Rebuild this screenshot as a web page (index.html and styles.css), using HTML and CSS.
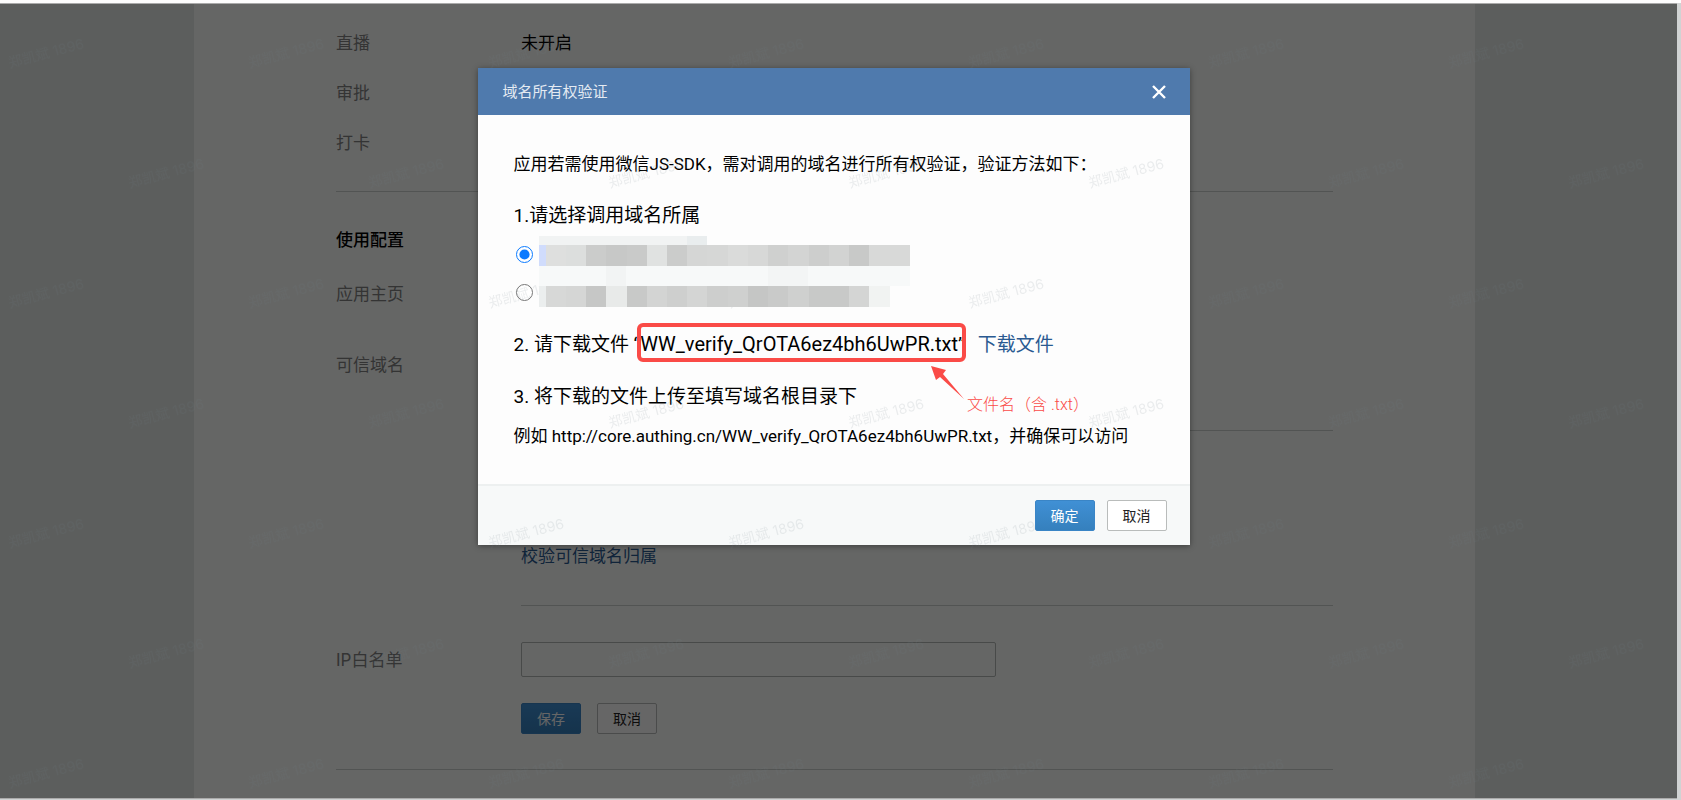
FILE: index.html
```html
<!DOCTYPE html>
<html lang="zh-CN">
<head>
    <meta charset="UTF-8">
    <meta name="viewport" content="width=device-width, initial-scale=1.0">
    <title>域名所有权验证</title>
    <link rel="stylesheet" href="styles.css">
</head>
<body>
    <div class="screen">
        <main class="page">
            <div class="row"><span class="label">直播</span><span class="value">未开启</span></div>
            <div class="row"><span class="label">审批</span></div>
            <div class="row"><span class="label">打卡</span></div>
            <hr class="line">

            <h2>使用配置</h2>
            <div class="field"><span class="label">应用主页</span></div>
            <div class="field"><span class="label">可信域名</span></div>
            <hr class="line line-indent">
            <div class="check-link"><a href="#">校验可信域名归属</a></div>
            <hr class="line line-indent">

            <form class="ip-form">
                <label class="label" for="ipList">IP白名单</label>
                <input type="text" id="ipList" class="ip-input">
                <div class="form-buttons">
                    <button type="button" class="btn btn-primary">保存</button>
                    <button type="button" class="btn">取消</button>
                </div>
            </form>
            <hr class="line">
        </main>

        <div class="overlay">
            <div class="dialog" role="dialog" aria-labelledby="dialogTitle">
                <div class="dialog-header">
                    <h1 id="dialogTitle">域名所有权验证</h1>
                    <button type="button" class="close-btn" aria-label="关闭">
                        <svg width="16" height="16" viewBox="0 0 16 16"><path d="M2 2L14 14M14 2L2 14" fill="none" stroke="#fff" stroke-width="2.4"/></svg>
                    </button>
                </div>

                <div class="dialog-body">
                    <p class="intro">应用若需使用微信JS-SDK，需对调用的域名进行所有权验证，验证方法如下：</p>
                    <h3>1.请选择调用域名所属</h3>
                    <div class="domain-list">
                        <input type="radio" name="domain" aria-label="域名一" checked>
                        <input type="radio" name="domain" aria-label="域名二">
                        <!-- domains are masked -->
                        <svg class="mosaic" width="371" height="71" viewBox="0 0 371 71" shape-rendering="crispEdges" aria-hidden="true">
                            <rect width="371" height="71" fill="#fdfdfd"/>
                            <rect width="168" height="9" fill="#f1f3f3"/>
                            <rect x="148" width="20" height="9" fill="#e9edee"/>
                            <rect y="30" width="371" height="20" fill="#f7f9f9"/>
                            <rect x="67" y="30" width="20" height="20" fill="#f2f4f4"/>
                            <rect x="229" y="30" width="40" height="20" fill="#f3f5f5"/>
                            <g>
                                <rect y="9" width="7" height="21" fill="#d0dcfc"/>
                                <rect x="7" y="9" width="20" height="21" fill="#dedfde"/>
                                <rect x="27" y="9" width="20" height="21" fill="#dcdedd"/>
                                <rect x="47" y="9" width="20" height="21" fill="#cbcccb"/>
                                <rect x="67" y="9" width="21" height="21" fill="#c7c8c7"/>
                                <rect x="88" y="9" width="20" height="21" fill="#c9cac9"/>
                                <rect x="108" y="9" width="20" height="21" fill="#e0e2e1"/>
                                <rect x="128" y="9" width="20" height="21" fill="#cbcccb"/>
                                <rect x="148" y="9" width="20" height="21" fill="#d5d6d5"/>
                                <rect x="168" y="9" width="21" height="21" fill="#d6d7d6"/>
                                <rect x="189" y="9" width="20" height="21" fill="#dadbda"/>
                                <rect x="209" y="9" width="20" height="21" fill="#d7d8d7"/>
                                <rect x="229" y="9" width="20" height="21" fill="#cfd0cf"/>
                                <rect x="249" y="9" width="21" height="21" fill="#d3d4d3"/>
                                <rect x="270" y="9" width="20" height="21" fill="#cdcecd"/>
                                <rect x="290" y="9" width="20" height="21" fill="#d2d3d2"/>
                                <rect x="310" y="9" width="20" height="21" fill="#c8c9c8"/>
                                <rect x="330" y="9" width="41" height="21" fill="#d8d9d8"/>
                            </g>
                            <g>
                                <rect y="50" width="7" height="21" fill="#ebeeee"/>
                                <rect x="7" y="50" width="20" height="21" fill="#d7d8d7"/>
                                <rect x="27" y="50" width="20" height="21" fill="#d5d6d5"/>
                                <rect x="47" y="50" width="20" height="21" fill="#c6c7c6"/>
                                <rect x="67" y="50" width="21" height="21" fill="#e8eae9"/>
                                <rect x="88" y="50" width="20" height="21" fill="#c8c9c8"/>
                                <rect x="108" y="50" width="20" height="21" fill="#d3d4d3"/>
                                <rect x="128" y="50" width="20" height="21" fill="#cecfce"/>
                                <rect x="148" y="50" width="20" height="21" fill="#d4d5d4"/>
                                <rect x="168" y="50" width="21" height="21" fill="#cdcecd"/>
                                <rect x="189" y="50" width="20" height="21" fill="#cfd0cf"/>
                                <rect x="209" y="50" width="20" height="21" fill="#c5c6c5"/>
                                <rect x="229" y="50" width="20" height="21" fill="#c9cac9"/>
                                <rect x="249" y="50" width="21" height="21" fill="#cfd0cf"/>
                                <rect x="270" y="50" width="40" height="21" fill="#c8c9c8"/>
                                <rect x="310" y="50" width="20" height="21" fill="#d4d5d4"/>
                                <rect x="330" y="50" width="21" height="21" fill="#f1f3f2"/>
                            </g>
                        </svg>
                    </div>
                    <h3>2. 请下载文件 “<span class="file-name">WW_verify_QrOTA6ez4bh6UwPR.txt<svg class="arrow" width="34" height="34" viewBox="0 0 34 34" aria-hidden="true"><path d="M0 0L15 4L12 8L33 33L9 11L5 14Z" fill="#fa4b47"/></svg><span class="note">文件名（含 .txt）</span></span>”<a href="#" class="download">下载文件</a></h3>
                    <h3>3. 将下载的文件上传至填写域名根目录下</h3>
                    <p class="example">例如 http://core.authing.cn/WW_verify_QrOTA6ez4bh6UwPR.txt，并确保可以访问</p>
                </div>

                <div class="dialog-footer">
                    <button type="button" class="btn btn-primary">确定</button>
                    <button type="button" class="btn">取消</button>
                </div>
            </div>
        </div>

        <svg class="watermark" aria-hidden="true">
            <defs>
                <pattern id="mark" width="240" height="240" patternUnits="userSpaceOnUse">
                    <text transform="translate(10 64) rotate(-15)">郑凯斌 1896</text>
                    <text transform="translate(130 184) rotate(-15)">郑凯斌 1896</text>
                </pattern>
            </defs>
            <rect width="100%" height="100%" fill="url(#mark)"/>
        </svg>
    </div>
</body>
</html>
```

FILE: styles.css
```css
* {
    box-sizing: border-box;
}
body {
    margin: 0;
    min-height: 100vh;
    display: flex;
    padding: 3px 4px 1px 0;
    background: linear-gradient(#fdfdfd, #fdfdfd) 0 0 / 100% 3px no-repeat, #d0d3d3;
    font-family: Inter, "Noto Sans CJK SC", sans-serif;
    font-size: 17px;
    line-height: 28px;
    color: #000;
}
h1, h2, h3, p {
    margin: 0;
    font-weight: 400;
}
a {
    color: #2a5a91;
    text-decoration: none;
}
.screen {
    position: relative;
    flex: 1;
    overflow: hidden;
    padding-right: 8px;
    background: #e7ebe9;
    border-top: 1px solid #aaa;
    border-bottom: 1px solid #aaa;
}

/* settings page behind the dialog */
.page {
    max-width: 1281px;
    min-height: 100%;
    margin: 0 auto;
    padding: 14px 142px 0;
    background: #fcfffd;
}
.row {
    display: flex;
    align-items: center;
    height: 50px;
}
.label {
    width: 185px;
    color: #828282;
}
.line {
    height: 1px;
    margin: 0;
    border: 0;
    background: #cdd1cf;
}
.row + .line {
    margin-top: 23px;
}
.line-indent {
    margin-left: 185px;
}
.page h2 {
    margin-top: 34px;
    font-size: 17px;
    font-weight: 500;
}
.field {
    margin-top: 26px;
}
.field + .field {
    margin-top: 43px;
}
.field + .line {
    margin-top: 51px;
}
.check-link {
    padding: 111px 0 35px 185px;
}
.ip-form {
    display: grid;
    grid-template-columns: 185px 1fr;
    align-items: center;
    row-gap: 26px;
    padding: 36px 0 35px;
}
.ip-input {
    width: 475px;
    max-width: 100%;
    height: 35px;
    border: 1px solid #b4b8b6;
    border-radius: 2px;
    background: transparent;
}
.form-buttons {
    grid-column: 2;
    display: flex;
    gap: 16px;
}
.btn {
    width: 60px;
    height: 31px;
    padding: 0 0 2px;
    border: 1px solid #b9bcbb;
    border-radius: 2px;
    background: #fff;
    color: #222;
    font-family: inherit;
    font-size: 14px;
    cursor: pointer;
}
.btn-primary {
    border-color: #3a85c6;
    background: linear-gradient(#4090d5, #3580bd);
    color: #fff;
}

/* dialog */
.overlay {
    position: absolute;
    inset: 0;
    padding: 64px 10px 0 0;
    background: rgba(0, 0, 0, 0.6);
}
.dialog {
    max-width: 712px;
    margin: 0 auto;
    background: #fdfdfd;
    box-shadow: 0 1px 6px rgba(0, 0, 0, 0.4);
}
.dialog-header {
    display: flex;
    align-items: center;
    justify-content: space-between;
    height: 47px;
    padding: 0 23px 0 25px;
    background: #4f7aad;
}
.dialog-header h1 {
    font-size: 15px;
    color: #e4eaf2;
}
.close-btn {
    display: flex;
    padding: 0;
    border: 0;
    background: none;
    cursor: pointer;
}
.dialog-body {
    padding: 35px 36px 34px;
    font-family: Roboto, "Noto Sans CJK SC", sans-serif;
}
.dialog-body h3 {
    margin-top: 24px;
    font-size: 19px;
}
.domain-list {
    position: relative;
    display: flex;
    flex-direction: column;
    gap: 21px;
    padding: 16px 0 10px 2px;
}
.domain-list + h3 {
    margin-top: 19px;
}
.domain-list input {
    width: 17px;
    height: 17px;
    margin: 0;
    accent-color: #0a7aff;
}
.mosaic {
    position: absolute;
    left: 25px;
    top: 6px;
    z-index: 2;
}
.file-name {
    position: relative;
    font-size: 20px;
}
.file-name::after {
    content: "";
    position: absolute;
    inset: -9px -8px -6px -3px;
    border: 4px solid #fa4b47;
    border-radius: 6px;
}
.arrow {
    position: absolute;
    right: -7px;
    top: 34px;
}
.note {
    position: absolute;
    left: 100%;
    top: 59px;
    margin-left: 9px;
    font-size: 16px;
    font-weight: 300;
    white-space: nowrap;
    color: #fa4b47;
    z-index: 2;
}
.download {
    margin-left: 13px;
}
.example {
    margin-top: 11px;
}
.dialog-footer {
    display: flex;
    justify-content: flex-end;
    gap: 12px;
    padding: 14px 23px;
    border-top: 2px solid #edf0f0;
    background: #f7f9f9;
}
.dialog-footer .btn {
    position: relative;
    z-index: 2;
}

.watermark {
    position: absolute;
    left: 0;
    top: 0;
    width: 100%;
    height: 100%;
    z-index: 1;
    pointer-events: none;
}
.watermark text {
    font-size: 14px;
    fill: rgba(112, 122, 132, 0.13);
}
```
